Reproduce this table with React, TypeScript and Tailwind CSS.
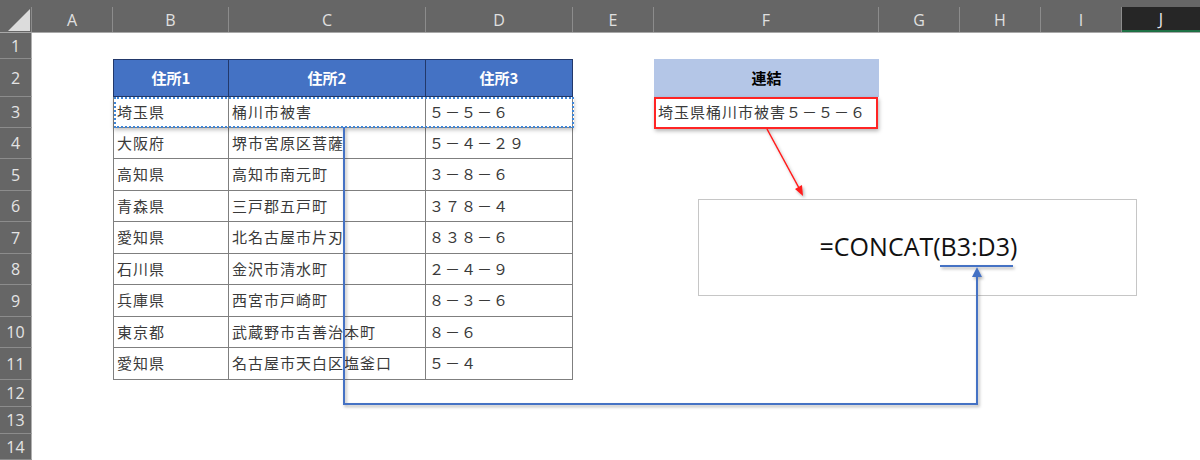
import React from "react";

const COLS =
  "grid grid-cols-[32px_81px_116px_197px_147px_81px_225px_81px_81px_81px_78px]";

const letters = ["A", "B", "C", "D", "E", "F", "G", "H", "I", "J"];

type RowDef = {
  n: number;
  h: string;
  kind: "blank" | "head" | "data";
  b?: string;
  c?: string;
  d?: string;
  f?: string;
};

const rows: RowDef[] = [
  { n: 1, h: "h-[26px]", kind: "blank" },
  { n: 2, h: "h-[38px]", kind: "head" },
  { n: 3, h: "h-[31px]", kind: "data", b: "埼玉県", c: "桶川市被害", d: "５－５－６", f: "埼玉県桶川市被害５－５－６" },
  { n: 4, h: "h-[31px]", kind: "data", b: "大阪府", c: "堺市宮原区菩薩", d: "５－４－２９" },
  { n: 5, h: "h-[32px]", kind: "data", b: "高知県", c: "高知市南元町", d: "３－８－６" },
  { n: 6, h: "h-[31px]", kind: "data", b: "青森県", c: "三戸郡五戸町", d: "３７８－４" },
  { n: 7, h: "h-[32px]", kind: "data", b: "愛知県", c: "北名古屋市片刃", d: "８３８－６" },
  { n: 8, h: "h-[31px]", kind: "data", b: "石川県", c: "金沢市清水町", d: "２－４－９" },
  { n: 9, h: "h-[32px]", kind: "data", b: "兵庫県", c: "西宮市戸崎町", d: "８－３－６" },
  { n: 10, h: "h-[31px]", kind: "data", b: "東京都", c: "武蔵野市吉善治本町", d: "８－６" },
  { n: 11, h: "h-[32px]", kind: "data", b: "愛知県", c: "名古屋市天白区塩釜口", d: "５－４" },
  { n: 12, h: "h-[27px]", kind: "blank" },
  { n: 13, h: "h-[27px]", kind: "blank" },
  { n: 14, h: "h-[26px]", kind: "blank" },
];

const jp = "font-['Noto_Sans_CJK_JP',sans-serif]";
const uiFont = "font-['Open_Sans','Noto_Sans',sans-serif]";

function RowHeader({ n }: { n: number }) {
  return (
    <div
      className={`flex items-center justify-center bg-[#666666] border-r border-r-[#b0b0b0] border-b border-b-[#8c8c8c] text-[16px] text-[#e4e4e4] ${uiFont}`}
    >
      {n}
    </div>
  );
}

function DataCell({ text, first }: { text?: string; first?: boolean }) {
  return (
    <div
      className={`flex items-center pl-[3px] whitespace-nowrap border-b border-r border-[#7f7f7f] text-[15px] tracking-[1px] text-[#3a3a3a] ${jp} ${
        first ? "border-l" : ""
      }`}
    >
      {text}
    </div>
  );
}

function HeadCell({ text, first }: { text: string; first?: boolean }) {
  return (
    <div
      className={`flex items-center justify-center bg-[#4472c4] border-t border-b border-r border-[#22386a] text-[15px] font-bold text-white ${jp} ${
        first ? "border-l" : ""
      }`}
    >
      {text}
    </div>
  );
}

function Row({ r }: { r: RowDef }) {
  return (
    <div className={`${COLS} ${r.h}`}>
      <RowHeader n={r.n} />
      <div />
      {r.kind === "head" ? (
        <>
          <HeadCell text="住所1" first />
          <HeadCell text="住所2" />
          <HeadCell text="住所3" />
        </>
      ) : r.kind === "data" ? (
        <>
          <DataCell text={r.b} first />
          <DataCell text={r.c} />
          <DataCell text={r.d} />
        </>
      ) : (
        <>
          <div />
          <div />
          <div />
        </>
      )}
      <div />
      {r.kind === "head" ? (
        <div className={`flex items-center justify-center bg-[#b4c6e7] text-[15px] font-bold text-black ${jp}`}>
          連結
        </div>
      ) : r.f ? (
        <div
          className={`flex items-center pl-[4px] whitespace-nowrap text-[15px] tracking-[1px] text-[#3a3a3a] ${jp}`}
        >
          {r.f}
        </div>
      ) : (
        <div />
      )}
      <div />
      <div />
      <div />
      <div />
    </div>
  );
}

export default function App() {
  return (
    <div className="relative w-[1200px] h-[460px] overflow-hidden bg-white">
      {/* column header */}
      <div className={`${COLS} h-[33px] bg-[#666666] border-b border-[#a8a8a8]`}>
        <div className="relative mt-[7px] h-[25px] border-r border-[#8c8c8c]">
          <svg width="32" height="25" className="absolute left-0 top-0">
            <polygon points="30,2 30,24 8,24" fill="#dcdcdc" />
          </svg>
        </div>
        {letters.map((l) =>
          l === "J" ? (
            <div
              key={l}
              className={`mt-[7px] h-[25px] flex items-center justify-center bg-[#262626] border-b-2 border-[#1e7145] text-[16px] text-[#e8e8e8] ${uiFont}`}
            >
              {l}
            </div>
          ) : (
            <div
              key={l}
              className={`mt-[7px] h-[25px] flex items-center justify-center border-r border-[#8c8c8c] text-[16px] text-[#e0e0e0] ${uiFont}`}
            >
              {l}
            </div>
          )
        )}
      </div>

      {rows.map((r) => (
        <Row key={r.n} r={r} />
      ))}

      {/* copy marquee around B3:D3 */}
      <div className="absolute left-[114px] top-[97px] w-[460px] h-[31px] border-2 border-dotted border-[#3f86d8] shadow-[0_2px_4px_rgba(0,0,0,0.25)]" />

      {/* red highlight around F3 */}
      <div className="absolute left-[654px] top-[97px] w-[224px] h-[32px] border-2 border-[#ff2424] shadow-[1px_2px_4px_rgba(0,0,0,0.3)]" />

      {/* formula box */}
      <div className="absolute left-[698px] top-[199px] w-[439px] h-[97px] flex items-center justify-center bg-white border border-[#c6c6c6]">
        <span className={`text-[25px] text-[#111111] ${uiFont} pb-[2px] pl-[2px]`}>=CONCAT(B3:D3)</span>
      </div>

      {/* connectors */}
      <svg className="absolute left-0 top-0 pointer-events-none" width="1200" height="460">
        <defs>
          <filter id="sh" x="-5%" y="-5%" width="110%" height="110%">
            <feDropShadow dx="1.5" dy="2" stdDeviation="1.5" floodColor="#000" floodOpacity="0.3" />
          </filter>
        </defs>
        <g filter="url(#sh)">
          <polyline
            points="344,127 344,404 977,404 977,276"
            fill="none"
            stroke="#4472c4"
            strokeWidth="2"
          />
          <polygon points="977,267 972,277 982,277" fill="#4472c4" />
          <line x1="940" y1="266" x2="1013" y2="266" stroke="#4472c4" strokeWidth="2" />
          <line x1="767" y1="129" x2="799" y2="188" stroke="#ff1a1a" strokeWidth="1.5" />
          <polygon points="803,196 795,189 802,185" fill="#ff1a1a" />
        </g>
      </svg>
    </div>
  );
}
